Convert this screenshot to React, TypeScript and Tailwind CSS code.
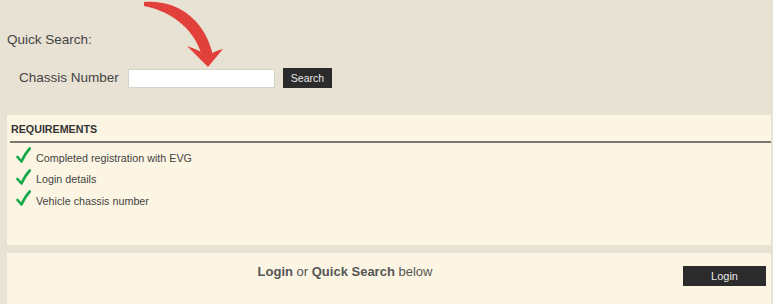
export default function App() {
  const items = ["Completed registration with EVG", "Login details", "Vehicle chassis number"];

  return (
    <div className="relative w-[773px] h-[304px] overflow-hidden bg-[#e8e2d4] font-['Liberation_Sans',Arial,sans-serif] text-[#444]">
      {/* red hint arrow over the search box */}
      <svg className="absolute left-[130px] top-0" width="100" height="80" viewBox="130 0 100 80">
        <path d="M144,2 C175,-1 206,18 213.5,58 L202.5,58 C196,31 174,12 144,6 Z" fill="#e2403a" />
        <path d="M187,46 Q199,50 208,56 Q214,51 223,49 L208,67 Z" fill="#e2403a" />
      </svg>

      <div className="h-[115px] pt-[31px]">
        <p className="pl-[7px] text-[13.5px] leading-[18px]">Quick Search:</p>
        <div className="mt-[19px] flex items-center">
          <span className="pl-[19px] w-[128px] text-[13.5px] leading-[18px]">Chassis Number</span>
          <input className="w-[147px] h-[19px] bg-white border border-[#d6d3cb] outline-none" />
          <button className="ml-[8px] w-[49px] h-[20px] bg-[#2b2b2b] text-[#e8e8e8] text-[10.5px] leading-none">Search</button>
        </div>
      </div>

      <div className="ml-[7px] mr-[2px] h-[130px] bg-[#fcf5e3] pt-[7px]">
        <h2 className="pl-[4px] text-[10.7px] leading-[14px] font-bold text-[#333]">REQUIREMENTS</h2>
        <div className="ml-[3px] mt-[5px] h-[2px] bg-[#7a776e]" />
        <ul className="mt-[4px] flex flex-col">
          {items.map((t) => (
            <li key={t} className="flex items-center h-[21.5px] pl-[9px]">
              <svg width="15" height="17" viewBox="0 0 15 17" className="mr-[5px] -mt-[4px]">
                <path d="M1.5,10 L5.5,14.5 C8,9 10.5,5 13.8,1.5" fill="none" stroke="#17a84a" strokeWidth="2.6" strokeLinecap="round" strokeLinejoin="round" />
              </svg>
              <span className="text-[10.75px] leading-[14px]">{t}</span>
            </li>
          ))}
        </ul>
      </div>

      <div className="mt-[8px] ml-[7px] mr-[2px] h-[51px] bg-[#fcf5e3] flex items-start">
        <p className="flex-1 text-center pt-[10px] text-[13px] leading-[18px] text-[#555]">
          <b>Login</b> or <b>Quick Search</b> below
        </p>
        <button className="mt-[13px] mr-[5px] w-[83px] h-[20px] bg-[#2b2b2b] text-[#e8e8e8] text-[11px] leading-none">Login</button>
      </div>
    </div>
  );
}
